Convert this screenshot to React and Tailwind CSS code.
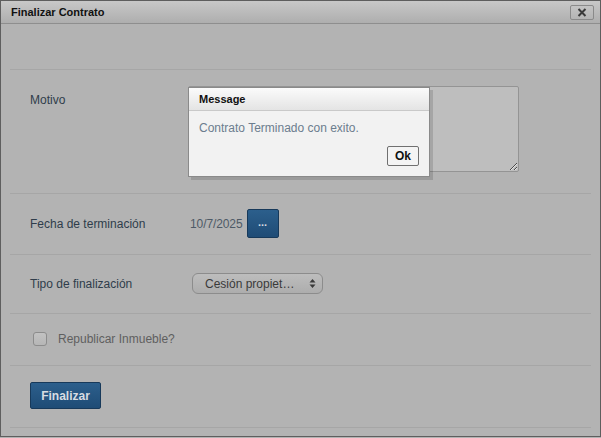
import React from 'react'

const font = { fontFamily: '"Liberation Sans", Arial, sans-serif' }

const Row = ({ className, children }) => (
  <div className={`border-b border-[#a6a6a6] ${className}`}>{children}</div>
)

const App = () => {
  return (
    <div className="relative w-[601px] h-[438px] bg-[#b3b3b3]" style={font}>
      <div className="w-[601px] h-[437px] border border-[#5e5e5e] flex flex-col">
        {/* Title bar */}
        <div className="h-[23px] shrink-0 flex items-center justify-between pl-[10px] pr-[6px] border-b border-[#8e8e8e] bg-gradient-to-b from-[#c8c8c8] to-[#aeaeae]">
          <span className="text-[11px] font-bold text-[#111]">Finalizar Contrato</span>
          <button className="w-[24px] h-[15px] flex items-center justify-center border border-[#8a8a8a] rounded-[2px] bg-gradient-to-b from-[#c4c4c4] to-[#b4b4b4]">
            <svg width="10" height="9" viewBox="0 0 10 9">
              <path d="M1.5 1 L8.5 8 M8.5 1 L1.5 8" stroke="#3a3a3a" strokeWidth="2" />
            </svg>
          </button>
        </div>

        {/* Body */}
        <div className="px-[9px] flex flex-col">
          <Row className="h-[46px]" />

          <Row className="h-[124px] pt-[16px] flex">
            <div className="w-[178px] pl-[20px] pt-[5px] text-[12px] text-[#2f3d4b]">Motivo</div>
            <textarea
              readOnly
              className="w-[331px] h-[86px] border border-[#949494] rounded-[2px] bg-[#bebebe] resize-y outline-none"
            />
          </Row>

          <Row className="h-[61px] pt-[15px] flex items-start">
            <div className="w-[180px] pl-[20px] h-[29px] flex items-center text-[12px] text-[#2f3d4b]">Fecha de terminación</div>
            <span className="h-[29px] flex items-center text-[12px] text-[#4e5a66] tracking-[-0.1px]">10/7/2025</span>
            <button className="ml-[4px] w-[32px] h-[29px] rounded-[2px] border border-[#17395a] bg-gradient-to-b from-[#2c5f8c] to-[#1f4c76] flex items-center justify-center text-[#d8dde2] text-[11px] font-bold leading-none pb-[3px]">
              ...
            </button>
          </Row>

          <Row className="h-[59px] pt-[18px] flex items-start">
            <div className="w-[182px] pl-[20px] h-[21px] flex items-center text-[12px] text-[#2f3d4b]">Tipo de finalización</div>
            <div className="w-[131px] h-[21px] rounded-[6px] border border-[#8c8c8c] bg-gradient-to-b from-[#bdbdbd] to-[#adadad] flex items-center pl-[12px] pr-[6px] text-[12px] text-[#3a3a3a]">
              <span className="flex-1">Cesión propiet…</span>
              <svg width="7" height="11" viewBox="0 0 7 11">
                <path d="M3.5 1 L6.5 4.5 L0.5 4.5 Z M3.5 10 L6.5 6.5 L0.5 6.5 Z" fill="#3a3a3a" />
              </svg>
            </div>
          </Row>

          <Row className="h-[52px] pt-[18px] flex items-start">
            <div className="ml-[23px] w-[14px] h-[14px] rounded-[3px] border border-[#8c8c8c] bg-gradient-to-b from-[#c2c2c2] to-[#b6b6b6]" />
            <span className="ml-[11px] h-[14px] flex items-center text-[12px] text-[#5f5f5f]">Republicar Inmueble?</span>
          </Row>

          <Row className="h-[62px] pt-[16px] flex items-start">
            <button className="ml-[20px] w-[71px] h-[27px] rounded-[2px] border border-[#17395a] bg-gradient-to-b from-[#2c5f8c] to-[#1f4c76] text-[12px] font-bold text-[#d8dde2]">
              Finalizar
            </button>
          </Row>
        </div>
      </div>

      {/* Message box */}
      <div className="absolute left-[188px] top-[87px] w-[242px] h-[90px] border border-[#8a8a8a] bg-[#f2f2f2] shadow-[3px_3px_0_rgba(0,0,0,0.13)] flex flex-col">
        <div className="h-[23px] shrink-0 flex items-center pl-[10px] border-b border-[#c9c9c9] bg-gradient-to-b from-[#fbfbfb] to-[#e4e4e4] text-[11px] font-bold text-[#111]">
          Message
        </div>
        <div className="pl-[10px] pt-[8px] text-[12px] text-[#6c7d8e]">Contrato Terminado con exito.</div>
        <div className="flex justify-end pr-[10px] mt-[9px]">
          <button className="w-[32px] h-[20px] border border-[#707070] rounded-[2px] bg-[#f4f4f4] text-[12px] font-bold text-[#111]">Ok</button>
        </div>
      </div>
    </div>
  )
}

export default App
